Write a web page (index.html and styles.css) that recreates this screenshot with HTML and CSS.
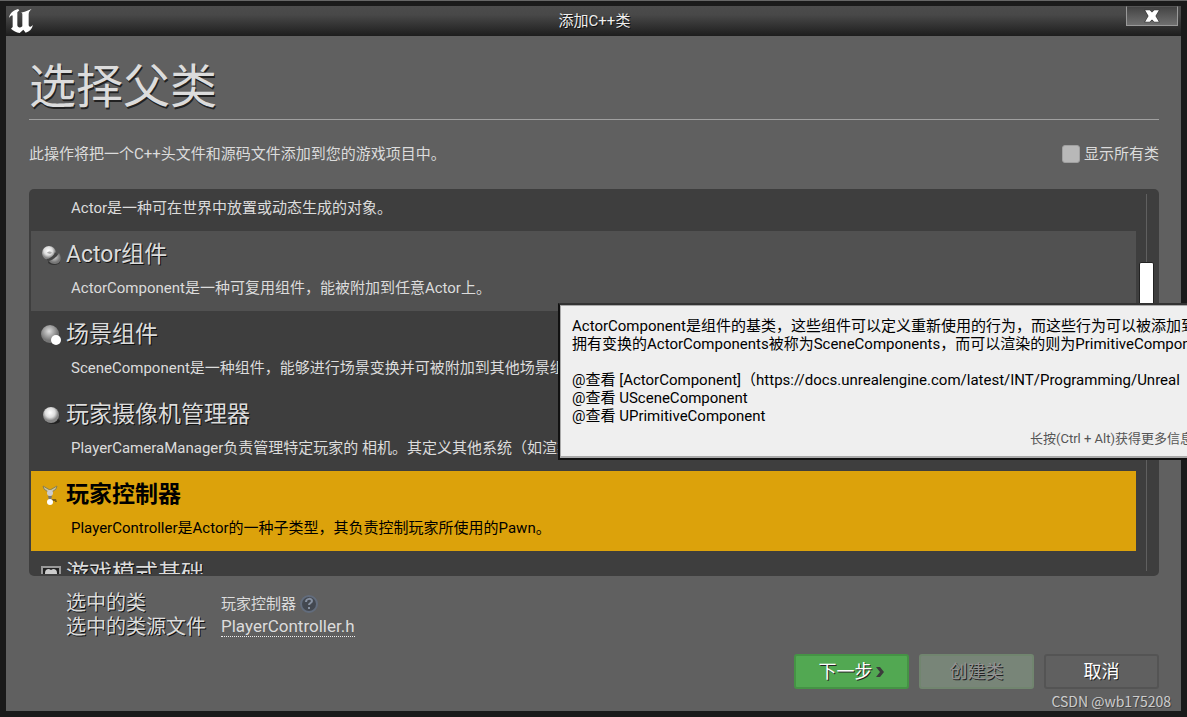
FILE: index.html
```html
<!DOCTYPE html>
<html lang="zh-CN">
<head>
<meta charset="utf-8">
<title>添加C++类</title>
<link rel="stylesheet" href="styles.css">
</head>
<body>
<div class="window">
  <header class="titlebar">
    <svg class="logo" viewBox="24 24 78 78" aria-hidden="true"><path d="M27 54C29 41 37 32 54 27L58 31 52 37V76C53 83 60 85 67 79V43C67 39 65 38 62 38L74 35 95 27C89 33 86 36 86 43V75C87 82 92 82 99 74C96 87 89 94 77 98L70 89 59 99C49 97 40 93 33 86L38 81V49C38 43 33 46 27 54Z"/></svg>
    <span class="caption">添加C++类</span>
    <button class="close" aria-label="关闭"><svg viewBox="0 0 14 14"><path d="M1 2h4l2 2 2-2h4L10 7l3 5H9l-2-2-2 2H1l3-5z"/></svg></button>
  </header>
  <main class="panel">
    <h1 class="heading">选择父类</h1>
    <div class="intro">
      <p>此操作将把一个C++头文件和源码文件添加到您的游戏项目中。</p>
      <label class="show-all"><input type="checkbox" class="check">显示所有类</label>
    </div>
    <section class="picker">
      <div class="viewport">
        <ul class="list">
          <li class="item"><p class="desc">Actor是一种可在世界中放置或动态生成的对象。</p></li>
          <li class="item hover">
            <h2 class="name"><svg class="icon" viewBox="0 0 20 20"><ellipse cx="13" cy="17" rx="6" ry="3" fill="#333"/><circle cx="8" cy="8" r="7" fill="url(#ball)"/><path d="M5 14c4 0 8-3 9-7l3 3-9 7z" fill="#444"/><path d="M8 16c4-1 8-4 10-8 3 4 2 11-4 11-3 0-5-1-6-3z" fill="url(#dim)"/><path d="M6 8c1-2 4-2 5 0l-2 1" fill="#aaa"/></svg>Actor组件</h2>
            <p class="desc">ActorComponent是一种可复用组件，能被附加到任意Actor上。</p>
          </li>
          <li class="item">
            <h2 class="name"><svg class="icon" viewBox="0 0 20 20"><circle cx="9" cy="9" r="9" fill="url(#dim)"/><circle cx="15" cy="15" r="5" fill="#fff"/></svg>场景组件</h2>
            <p class="desc">SceneComponent是一种组件，能够进行场景变换并可被附加到其他场景组件。</p>
          </li>
          <li class="item">
            <h2 class="name"><svg class="icon" viewBox="0 0 20 20"><ellipse cx="12" cy="16" rx="7" ry="3" fill="#222"/><circle cx="10" cy="10" r="8" fill="url(#ball)"/></svg>玩家摄像机管理器</h2>
            <p class="desc">PlayerCameraManager负责管理特定玩家的 相机。其定义其他系统（如渲染）</p>
          </li>
          <li class="item selected">
            <h2 class="name"><svg class="icon" viewBox="0 0 20 20"><path d="M2 1 9 5l7-4-1 3-4 3H7L3 4z" fill="#c9c4a4" stroke="#8b8050"/><circle cx="9" cy="8" r="3" fill="#ccc"/><path d="M7 11h4l-1 4H8z" fill="#777"/><path d="M10 14h5l1 3h-2v-1h-4z" fill="#7d5f13"/><circle cx="9" cy="17" r="3" fill="#fff"/></svg>玩家控制器</h2>
            <p class="desc">PlayerController是Actor的一种子类型，其负责控制玩家所使用的Pawn。</p>
          </li>
          <li class="item">
            <h2 class="name"><svg class="icon" viewBox="0 0 20 20"><path d="M1 3h18v14H1z" fill="#222" stroke="#999" stroke-width="2"/><path d="M4 9q0-4 4-4l2 1 2-1q4 0 4 4v5H4z" fill="#ccc"/></svg>游戏模式基础</h2>
          </li>
        </ul>
      </div>
      <div class="scroll"><div class="thumb"></div></div>
    </section>
    <dl class="summary">
      <dt>选中的类</dt>
      <dd class="chosen">玩家控制器<svg class="help" viewBox="0 0 18 18"><circle cx="9" cy="9" r="8" fill="#434850" stroke="#626c7c" stroke-width="2"/><path d="M6 7c0-4 6-4 6-1 0 2-3 2-3 4M9 12v2" fill="none" stroke="#8791a1" stroke-width="2"/></svg></dd>
      <dt>选中的类源文件</dt>
      <dd><a class="source" href="#">PlayerController.h</a></dd>
    </dl>
    <footer class="actions">
      <button class="btn next">下一步<svg class="arrow" viewBox="0 0 10 12"><path d="M1 1h4l4 5-4 5H1l4-5z"/></svg></button>
      <button class="btn create" disabled>创建类</button>
      <button class="btn">取消</button>
    </footer>
  </main>
  <aside class="tip-layer">
    <div class="tip">
      <p>ActorComponent是组件的基类，这些组件可以定义重新使用的行为，而这些行为可以被添加到</p>
      <p>拥有变换的ActorComponents被称为SceneComponents，而可以渲染的则为PrimitiveComponents</p>
      <p class="gap">@查看 [ActorComponent]（https://docs.unrealengine.com/latest/INT/Programming/Unreal</p>
      <p>@查看 USceneComponent</p>
      <p>@查看 UPrimitiveComponent</p>
      <p class="more">长按(Ctrl + Alt)获得更多信息</p>
    </div>
  </aside>
  <span class="mark">CSDN @wb175208</span>
</div>
<svg class="defs" aria-hidden="true"><defs>
  <radialGradient id="ball" cx=".45" cy=".35"><stop offset="0" stop-color="#fff"/><stop offset=".6" stop-color="#ddd"/><stop offset="1" stop-color="#888"/></radialGradient>
  <radialGradient id="dim" cx=".45" cy=".35"><stop offset="0" stop-color="#ddd"/><stop offset="1" stop-color="#777"/></radialGradient>
</defs></svg>
</body>
</html>
```
FILE: styles.css
```css
* { box-sizing: border-box; }
body, h1, h2, p, ul, dl, dd { margin: 0; padding: 0; }
body {
  font: 15px/18px Roboto, "Noto Sans CJK SC", sans-serif;
  color: #dcdcdc;
  background: #1b1b1b;
}
button, input { font: inherit; margin: 0; }
.defs { position: absolute; width: 0; height: 0; }

.window {
  position: relative;
  display: flex;
  flex-direction: column;
  min-height: 100vh;
  padding: 5px 6px 6px;
  border-top: 1px solid #666;
  background: #1a1a1a;
  overflow: hidden;
}
.titlebar {
  display: grid;
  grid-template-columns: 1fr auto 1fr;
  height: 30px;
  padding-left: 2px;
  background: linear-gradient(#4c4c4c, #484848 30%, #1d1d1d);
}
.logo { width: 26px; height: 26px; margin-top: 2px; fill: #fff; }
.caption { font-size: 15px; line-height: 30px; color: #eee; text-shadow: 1px 1px #111; }
.close {
  justify-self: end;
  width: 52px;
  height: 20px;
  margin-right: 3px;
  padding: 0;
  border: 1px solid #999;
  border-top-color: #555;
  background: linear-gradient(#444, #707070);
}
.close svg { display: block; width: 16px; height: 16px; margin: 0 auto; fill: #fff; stroke: #333; stroke-width: 1px; paint-order: stroke; }

.panel {
  flex: 1;
  display: flex;
  flex-direction: column;
  padding: 20px 22px 22px 23px;
  background: #606060;
}
.heading {
  height: 64px;
  font-size: 47px;
  font-weight: 400;
  line-height: 62px;
  border-bottom: 1px solid #a0a0a0;
  text-shadow: 1px 2px #222;
}
.intro { display: flex; justify-content: space-between; align-items: center; height: 69px; padding-bottom: 2px; }
.show-all { display: flex; align-items: center; gap: 4px; }
.check { appearance: none; width: 18px; height: 18px; border: 1px solid #a0a0a0; border-radius: 3px; background: #b8b8b8; }

.picker {
  flex: 1 1 387px;
  display: flex;
  padding: 2px;
  border-radius: 5px;
  background: #3e3e3e;
}
.viewport { flex: 1; height: 383px; overflow: hidden; }
.list { margin-top: -40px; list-style: none; }
.item { display: flex; flex-direction: column; justify-content: flex-end; height: 80px; padding: 8px 8px 14px 10px; white-space: nowrap; }
.item:last-child { justify-content: flex-start; }
.hover { background: #515151; }
.selected { color: #000; background: #dca20b; }
.name { display: flex; align-items: center; gap: 5px; height: 30px; font-size: 23px; font-weight: 400; line-height: 30px; text-shadow: 1px 1px #111; }
.selected .name { font-weight: 700; text-shadow: none; }
.icon { width: 20px; height: 20px; }
.desc { padding-left: 30px; margin-top: 9px; }
.scroll { width: 21px; padding: 3px; background: linear-gradient(#606060, #606060) 10px 3px / 1px calc(100% - 6px) no-repeat; }
.thumb { width: 15px; height: 70px; margin-top: 68px; border: 1px solid #222; border-radius: 2px; background: #fff; }

.summary {
  display: grid;
  grid-template-columns: 155px 1fr;
  grid-auto-rows: 24px;
  align-items: center;
  padding: 15px 0 0 37px;
}
.summary dt { font-size: 20px; line-height: 24px; text-shadow: 1px 1px #111; }
.chosen { display: flex; align-items: center; gap: 4px; padding-top: 2px; }
.help { width: 18px; height: 18px; overflow: visible; }
.source { font-size: 17px; line-height: 18px; color: inherit; text-decoration: none; border-bottom: 1px dotted #eee; }
.summary dd:last-child { padding-bottom: 2px; }

.actions { display: flex; justify-content: flex-end; gap: 10px; margin-top: 15px; }
.btn {
  display: flex;
  align-items: center;
  justify-content: center;
  gap: 2px;
  width: 115px;
  height: 35px;
  padding: 0;
  border: 2px solid #545454;
  border-radius: 3px;
  background: #606060;
  color: #fff;
  font-size: 18px;
  text-shadow: 1px 1px #222;
}
.next { border-color: #459345; background: #52a852; }
.create { border-color: #71856f; background: #788578; color: #939393; }
.arrow { width: 10px; height: 12px; fill: #3c3c3c; }

.tip-layer { position: absolute; top: 302px; left: 558px; right: 0; overflow: hidden; }
.tip {
  width: calc(100% + 20px);
  padding: 12px 12px 10px;
  border: 2px solid #111;
  border-top-color: #333;
  background: #efefef;
  box-shadow: inset 1px 1px #aaa, inset 0 -2px #aaa;
  color: #000;
  white-space: nowrap;
}
.tip p { height: 18px; }
.gap { margin-top: 18px; }
.tip .more { margin-top: 5px; font-size: 13px; text-align: right; color: #555; }
.mark { position: absolute; right: 16px; bottom: 6px; font: 14px/20px "Noto Sans CJK SC", sans-serif; color: #ccc; text-shadow: 1px 1px #444; }
```
